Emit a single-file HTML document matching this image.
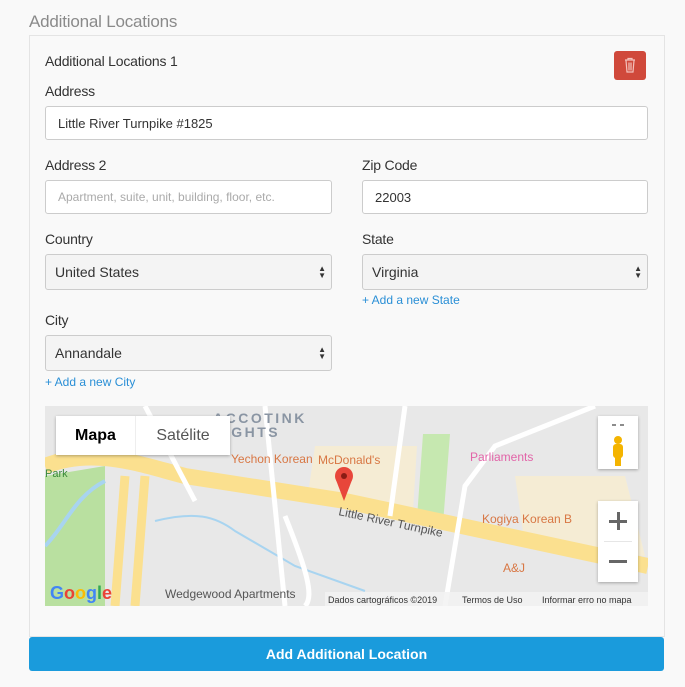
<!DOCTYPE html>
<html><head><meta charset="utf-8"><style>
*{box-sizing:border-box;margin:0;padding:0}
body{width:685px;height:687px;background:#f9f9f9;font-family:"Liberation Sans",sans-serif;color:#333;position:relative;overflow:hidden}
.a{position:absolute}
.lbl{font-size:14px;color:#333;white-space:nowrap;letter-spacing:-0.2px}
.inp{position:absolute;background:#fff;border:1px solid #ccc;border-radius:3px;font-size:13px;padding-left:12px;display:flex;align-items:center;color:#333}
.sel{background:#f4f4f4;font-size:14px;padding-left:9px}
.arr{position:absolute;right:5px;top:50%;transform:translateY(-50%);font-size:8px;line-height:7px;color:#333;text-align:center}
.lnk{font-size:12px;color:#2a8fd6}
</style></head><body>
<div class="a" style="left:29px;top:12px;font-size:17px;color:#8a8a8a;letter-spacing:-0.2px">Additional Locations</div>
<div class="a" style="left:29px;top:35px;width:636px;height:602px;border:1px solid #e4e4e4;background:#f9f9f9"></div>
<div class="a lbl" style="left:45px;top:53px">Additional Locations 1</div>
<div class="a" style="left:614px;top:51px;width:32px;height:29px;background:#d0493b;border-radius:3px">
<svg width="32" height="29" viewBox="0 0 32 29"><g fill="none" stroke="#f3c2bc" stroke-width="1.2"><path d="M11 9h10M14 9V7.5h4V9M12 9.5l1 11.5h6l1-11.5M15 11.5v8M17 11.5v8"/></g></svg></div>
<div class="a lbl" style="left:45px;top:83px">Address</div>
<div class="inp" style="left:45px;top:106px;width:603px;height:34px">Little River Turnpike #1825</div>
<div class="a lbl" style="left:45px;top:157px">Address 2</div>
<div class="inp" style="left:45px;top:180px;width:287px;height:34px;color:#aaa;font-size:12px">Apartment, suite, unit, building, floor, etc.</div>
<div class="a lbl" style="left:362px;top:157px">Zip Code</div>
<div class="inp" style="left:362px;top:180px;width:286px;height:34px">22003</div>
<div class="a lbl" style="left:45px;top:231px">Country</div>
<div class="inp sel" style="left:45px;top:254px;width:287px;height:36px">United States<div class="arr">▲<br>▼</div></div>
<div class="a lbl" style="left:362px;top:231px">State</div>
<div class="inp sel" style="left:362px;top:254px;width:286px;height:36px">Virginia<div class="arr">▲<br>▼</div></div>
<div class="a lnk" style="left:362px;top:293px">+ Add a new State</div>
<div class="a lbl" style="left:45px;top:312px">City</div>
<div class="inp sel" style="left:45px;top:335px;width:287px;height:36px">Annandale<div class="arr">▲<br>▼</div></div>
<div class="a lnk" style="left:45px;top:375px">+ Add a new City</div>
<div class="a" style="left:45px;top:406px;width:603px;height:200px;overflow:hidden;background:#e8e8e8">
<svg width="603" height="200" viewBox="0 0 603 200" font-family="Liberation Sans,sans-serif">
<path d="M0 70 L60 60 L60 200 L0 200Z" fill="#b9e0a0"/>
<path d="M378 28 L405 28 L398 118 L372 112Z" fill="#c6e8b0"/>
<path d="M270 40 L372 40 L368 105 L262 95Z" fill="#f5ecd4"/>
<path d="M470 70 L580 70 L600 150 L480 140Z" fill="#f5ecd4"/>
<path d="M0 60 C50 40 100 60 140 70 L300 95 L603 160" stroke="#fbe08f" stroke-width="16" fill="none"/>
<path d="M80 70 L70 200 M100 70 L90 200" stroke="#fbe08f" stroke-width="9" fill="none"/>
<path d="M0 140 C20 120 30 90 60 75" stroke="#a8d4f0" stroke-width="4" fill="none"/>
<path d="M110 115 C150 105 170 110 190 125 L250 160 L320 185" stroke="#a8d4f0" stroke-width="2" fill="none"/>
<path d="M220 0 L240 200 M360 0 L345 110 M400 200 L420 80 L450 40 L550 0 M240 110 C260 160 270 190 260 200 M100 0 L150 95" stroke="#fff" stroke-width="5" fill="none"/>
<text x="168" y="17" font-size="14" font-weight="bold" fill="#8a95a3" letter-spacing="2.5">ACCOTINK</text>
<text x="168" y="31" font-size="14" font-weight="bold" fill="#8a95a3" letter-spacing="2.5">EIGHTS</text>
<text x="186" y="57" font-size="12" fill="#d87744">Yechon Korean</text>
<text x="273" y="58" font-size="12" fill="#d87744">McDonald's</text>
<text x="425" y="55" font-size="12" fill="#e264a8">Parliaments</text>
<text x="437" y="117" font-size="12" fill="#d87744">Kogiya Korean B</text>
<text x="458" y="166" font-size="12" fill="#d87744">A&amp;J</text>
<text x="293" y="109" font-size="12" fill="#555" transform="rotate(12 293 109)">Little River Turnpike</text>
<text x="120" y="192" font-size="12" fill="#555">Wedgewood Apartments</text>
<text x="0" y="71" font-size="11" fill="#3a8a3a">Park</text>
<circle cx="299" cy="70" r="9" fill="#e8463a"/><path d="M291 74 L299 95 L307 74Z" fill="#e8463a"/><circle cx="299" cy="70" r="3" fill="#8a1c14"/>
<text x="5" y="193" font-size="18" font-weight="bold" fill="#4285f4">G<tspan fill="#ea4335">o</tspan><tspan fill="#fbbc05">o</tspan><tspan fill="#4285f4">g</tspan><tspan fill="#34a853">l</tspan><tspan fill="#ea4335">e</tspan></text>
<rect x="280" y="186" width="323" height="14" fill="#f2f2f2" opacity=".85"/>
<text x="283" y="197" font-size="9" fill="#333">Dados cartográficos ©2019</text>
<text x="417" y="197" font-size="9" fill="#333">Termos de Uso</text>
<text x="497" y="197" font-size="9" fill="#333">Informar erro no mapa</text>
</svg>
<div class="a" style="left:11px;top:10px;width:174px;height:39px;background:#fff;box-shadow:0 1px 3px rgba(0,0,0,.3);display:flex;font-size:16px">
<div style="width:80px;display:flex;align-items:center;justify-content:center;font-weight:bold;color:#000;border-right:1px solid #eee">Mapa</div>
<div style="flex:1;display:flex;align-items:center;justify-content:center;color:#555">Satélite</div></div>
<div class="a" style="left:553px;top:10px;width:40px;height:53px;background:#fff;box-shadow:0 1px 3px rgba(0,0,0,.3)">
<svg width="40" height="53"><path d="M14 9h4M22 9h4" stroke="#666" stroke-width="1.5"/><circle cx="20" cy="24" r="4" fill="#f4b400"/><rect x="15" y="28" width="10" height="14" rx="3" fill="#f4b400"/><rect x="17" y="40" width="6" height="10" fill="#f4b400"/></svg></div>
<div class="a" style="left:553px;top:95px;width:40px;height:81px;background:#fff;box-shadow:0 1px 3px rgba(0,0,0,.3)">
<div style="position:absolute;left:11px;top:19px;width:18px;height:3px;background:#666"></div>
<div style="position:absolute;left:18.5px;top:11px;width:3px;height:18px;background:#666"></div>
<div style="position:absolute;left:6px;top:40px;width:28px;height:1px;background:#e6e6e6"></div>
<div style="position:absolute;left:11px;top:59px;width:18px;height:3px;background:#666"></div></div>
</div>
<div class="a" style="left:29px;top:637px;width:635px;height:34px;background:#1a9bdc;border-radius:3px;color:#fff;font-size:14px;font-weight:bold;display:flex;align-items:center;justify-content:center">Add Additional Location</div>
</body></html>
